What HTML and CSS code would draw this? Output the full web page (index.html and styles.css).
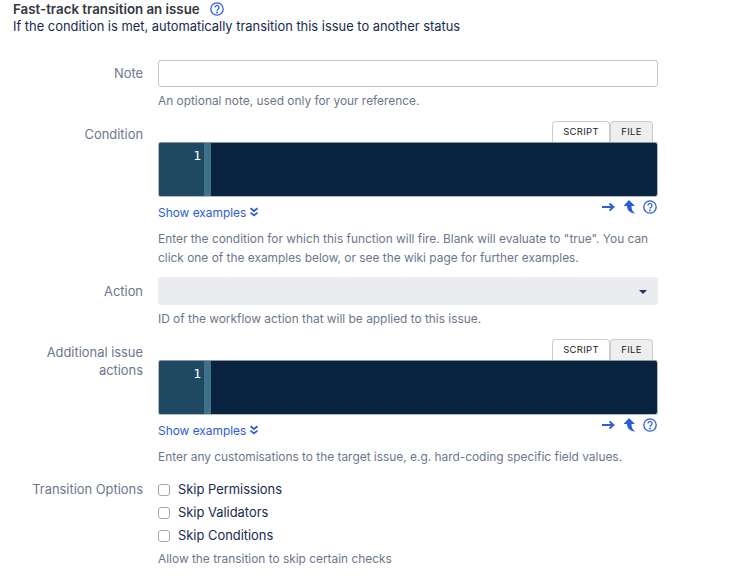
FILE: index.html
```html
<!DOCTYPE html>
<html lang="en">
<head>
<meta charset="utf-8">
<title>Fast-track transition an issue</title>
<link rel="stylesheet" href="styles.css">
</head>
<body>
<header class="head">
  <h1 class="title">Fast-track transition an issue
    <svg class="title-help" viewBox="0 0 14 14" width="14" height="14"><circle cx="7" cy="7" r="6.2" fill="none" stroke="#2c5cd6" stroke-width="1.3"/><path d="M5 5.4a2 2 0 1 1 3 1.8c-.7.4-1 .7-1 1.500" fill="none" stroke="#2c5cd6" stroke-width="1.3"/><circle cx="7" cy="10.500" r=".9" fill="#2c5cd6"/></svg>
  </h1>
  <p class="sub">If the condition is met, automatically transition this issue to another status</p>
</header>
<form class="form">
  <div class="row row-note">
    <label class="label">Note</label>
    <div class="field">
      <input class="text" type="text">
      <p class="hint hint-note">An optional note, used only for your reference.</p>
    </div>
  </div>
  <div class="row row-cond">
    <label class="label label-cond">Condition</label>
    <div class="field">
      <div class="tabs"><span class="tab active">SCRIPT</span><span class="tab">FILE</span></div>
      <div class="editor"><div class="gutter">1</div><div class="fold"></div><div class="code"></div></div>
      <div class="tools">
        <a class="show">Show examples <svg class="chev" viewBox="0 0 10 10" width="10" height="10"><path d="M1.5 1.2 5 4l3.5-2.8M1.5 5.6 5 8.4l3.5-2.8" fill="none" stroke="#2c5cd6" stroke-width="1.8"/></svg></a>
        <span class="icons">
          <svg class="arrow" viewBox="0 0 13 10" width="13" height="10"><path d="M0 5h11M7.500 1.500 11.500 5l-4 3.500" fill="none" stroke="#2c5cd6" stroke-width="1.800"/></svg>
          <svg viewBox="0 0 14 14" width="14" height="14"><path d="M6 0 .5 6H4c0 4 2.500 7 8.500 7.500C9.500 12 8.500 9.500 8.500 6H12z" fill="#2c5cd6"/></svg>
          <svg viewBox="0 0 14 14" width="14" height="14"><circle cx="7" cy="7" r="6.200" fill="none" stroke="#2c5cd6" stroke-width="1.300"/><path d="M5 5.400a2 2 0 1 1 3 1.800c-.7.4-1 .7-1 1.500" fill="none" stroke="#2c5cd6" stroke-width="1.300"/><circle cx="7" cy="10.500" r=".9" fill="#2c5cd6"/></svg>
        </span>
      </div>
      <p class="hint">Enter the condition for which this function will fire. Blank will evaluate to "true". You can click one of the examples below, or see the wiki page for further examples.</p>
    </div>
  </div>
  <div class="row row-action">
    <label class="label label-action">Action</label>
    <div class="field">
      <div class="select"><span class="caret"></span></div>
      <p class="hint hint-note">ID of the workflow action that will be applied to this issue.</p>
    </div>
  </div>
  <div class="row row-add">
    <label class="label label-cond label-add">Additional issue actions</label>
    <div class="field">
      <div class="tabs"><span class="tab active">SCRIPT</span><span class="tab">FILE</span></div>
      <div class="editor"><div class="gutter">1</div><div class="fold"></div><div class="code"></div></div>
      <div class="tools">
        <a class="show">Show examples <svg class="chev" viewBox="0 0 10 10" width="10" height="10"><path d="M1.5 1.2 5 4l3.5-2.8M1.5 5.600 5 8.400l3.5-2.800" fill="none" stroke="#2c5cd6" stroke-width="1.800"/></svg></a>
        <span class="icons">
          <svg class="arrow" viewBox="0 0 13 10" width="13" height="10"><path d="M0 5h11M7.500 1.500 11.500 5l-4 3.500" fill="none" stroke="#2c5cd6" stroke-width="1.800"/></svg>
          <svg viewBox="0 0 14 14" width="14" height="14"><path d="M6 0 .5 6H4c0 4 2.500 7 8.500 7.500C9.500 12 8.500 9.500 8.500 6H12z" fill="#2c5cd6"/></svg>
          <svg viewBox="0 0 14 14" width="14" height="14"><circle cx="7" cy="7" r="6.200" fill="none" stroke="#2c5cd6" stroke-width="1.300"/><path d="M5 5.400a2 2 0 1 1 3 1.800c-.7.4-1 .7-1 1.500" fill="none" stroke="#2c5cd6" stroke-width="1.300"/><circle cx="7" cy="10.500" r=".9" fill="#2c5cd6"/></svg>
        </span>
      </div>
      <p class="hint">Enter any customisations to the target issue, e.g. hard-coding specific field values.</p>
    </div>
  </div>
  <div class="row row-opts">
    <label class="label label-opts">Transition Options</label>
    <div class="field">
      <label class="check"><span class="box"></span>Skip Permissions</label>
      <label class="check"><span class="box"></span>Skip Validators</label>
      <label class="check"><span class="box"></span>Skip Conditions</label>
      <p class="hint hint-opts">Allow the transition to skip certain checks</p>
    </div>
  </div>
</form>
</body>
</html>
```
FILE: styles.css
```css
* { box-sizing: border-box; }
html, body { margin: 0; padding: 0; background: #fff; overflow: hidden; }
body {
  font-family: Inter, "Liberation Sans", sans-serif;
  font-size: 12.9px;
  line-height: 18px;
  color: #172b4d;
  height: 575px;
}
.head { padding: 0 0 0 13px; }
.title { margin: 0; height: 18px; font-size: 13.3px; line-height: 18px; font-weight: 600; color: #33383f; display: flex; align-items: center; gap: 10px; }
.title-help { flex: none; }
.sub { margin: 0; }
.form { margin-top: 24px; }
.row { display: grid; grid-template-columns: 143px 500px; column-gap: 15px; }
.label { text-align: right; color: #6b778c; line-height: 18px; }
.row-note .label { padding-top: 5px; }
.hint { margin: 0; color: #6b778c; font-size: 11.9px; line-height: 19px; }
.text { display: block; width: 100%; height: 27px; border: 1px solid #c1c7d0; border-radius: 3px; background: #fff; }
.hint-note { margin-top: 4px; }
.row-cond { margin-top: 11px; }
.label-cond { padding-top: 5px; }
.label-add { padding-left: 40px; }
.tabs { display: flex; justify-content: flex-end; height: 21px; padding-right: 5px; }
.tab { width: 43px; height: 21px; border: 1px solid #ccc; border-bottom: 0; border-radius: 4px 4px 0 0; background: #eee; font-size: 9.5px; line-height: 20px; text-align: center; color: #222; letter-spacing: .3px; }
.tab.active { width: 58px; background: #fff; }
.editor { display: flex; height: 55px; border: 1px solid #b5bbc4; border-top-color: #8f959e; border-radius: 3px; background: #092340; overflow: hidden; }
.gutter { width: 45px; background: #1f4863; color: #fff; text-align: right; font-family: "DejaVu Sans Mono", monospace; font-size: 13px; line-height: 18px; padding: 4px 3px 0 0; }
.fold { width: 7px; background: #3e7288; }
.code { flex: 1; }
.tools { display: flex; justify-content: space-between; height: 32px; padding-top: 2px; }
.show { color: #2c5cd6; font-size: 11.9px; line-height: 24px; display: flex; align-items: center; gap: 3px; height: 24px; align-self: flex-start; margin-top: 2px; }
.chev { margin-top: -3px; }
.icons { display: flex; gap: 6px; align-items: center; height: 14px; padding-top: 1px; padding-right: 1px; }
.arrow { margin-right: 2px; }
.row-action { margin-top: 10px; }
.label-action { padding-top: 6px; }
.select { height: 28px; background: #ebecf0; border-radius: 3px; position: relative; }
.caret { position: absolute; right: 11px; top: 13px; border: 4px solid transparent; border-top: 4px solid #253858; border-bottom: 0; }
.row-add { margin-top: 11px; }
.row-opts { margin-top: 12px; }
.label-opts { padding-top: 3px; }
.check { display: flex; align-items: center; gap: 8px; height: 23px; color: #172b4d; }
.box { width: 12px; height: 12px; border: 1px solid #a5a9b0; border-radius: 3px; background: #fff; }
.hint-opts { margin-top: 2px; }
```
